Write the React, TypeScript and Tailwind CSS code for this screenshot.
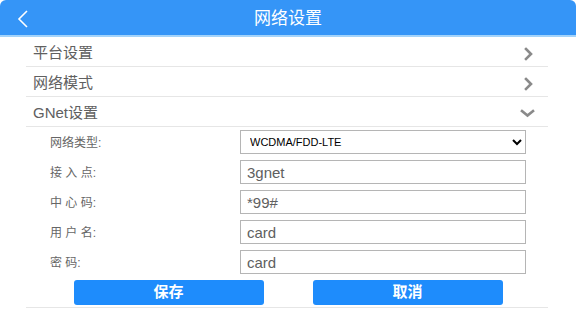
import { useState } from "react";

const fields = [
  { label: "接 入 点:", value: "3gnet" },
  { label: "中 心 码:", value: "*99#" },
  { label: "用 户 名:", value: "card" },
  { label: "密 码:", value: "card" },
];

function ChevronRight() {
  return (
    <svg width="9" height="14" viewBox="0 0 9 14" fill="none">
      <path d="M2 2l5 5-5 5" stroke="#8a8a8a" strokeWidth="2.6" strokeLinecap="square" />
    </svg>
  );
}

function ChevronDown() {
  return (
    <svg width="15" height="9" viewBox="0 0 15 9" fill="none">
      <path d="M2 2l5.5 4.5L13 2" stroke="#8a8a8a" strokeWidth="2.6" strokeLinecap="square" />
    </svg>
  );
}

export default function App() {
  const [netType, setNetType] = useState("WCDMA/FDD-LTE");
  const [values, setValues] = useState(fields.map((f) => f.value));

  return (
    <div
      className="w-[576px] h-[310px] bg-white overflow-hidden"
      style={{ fontFamily: '"Liberation Sans", Arial, "Noto Sans CJK SC", sans-serif' }}
    >
      {/* Header */}
      <header className="relative h-[37px] bg-[#3595f7] rounded-t-[6px] border-b-2 border-[#a3d3fa] flex items-center justify-center">
        <button className="absolute left-[17px] top-[9px]">
          <svg width="12" height="20" viewBox="0 0 12 20" fill="none">
            <path d="M10 2L2 10l8 8" stroke="white" strokeWidth="1.6" />
          </svg>
        </button>
        <h1 className="text-white text-[17px] leading-none mt-[1px]">网络设置</h1>
      </header>

      <div className="ml-[26px] w-[522px]">
        {/* Menu rows */}
        <div className="h-[30px] flex items-center justify-between pl-[7px] pr-[15px] border-b border-[#e6e6e6]">
          <span className="text-[15px] text-[#606060] pt-[4px]">平台设置</span>
          <span className="pt-[4px]"><ChevronRight /></span>
        </div>
        <div className="h-[30px] flex items-center justify-between pl-[7px] pr-[15px] border-b border-[#e6e6e6]">
          <span className="text-[15px] text-[#606060] pt-[4px]">网络模式</span>
          <span className="pt-[4px]"><ChevronRight /></span>
        </div>
        <div className="h-[30px] flex items-center justify-between pl-[7px] pr-[13px] border-b border-[#e6e6e6]">
          <span className="text-[15px] text-[#606060] pt-[4px]">GNet设置</span>
          <span className="pt-[4px]"><ChevronDown /></span>
        </div>

        {/* Form */}
        <div className="pt-[3px] border-b border-[#e6e6e6] pb-[2px]">
          <div className="h-[30px] flex items-start">
            <label className="w-[214px] pl-[24px] pt-[4px] text-[12px] text-[#666]">网络类型:</label>
            <select
              value={netType}
              onChange={(e) => setNetType(e.target.value)}
              className="w-[286px] h-[24px] border border-[#b5b5b5] bg-white text-[11px] text-black pl-[5px] pr-[4px]"
            >
              <option>WCDMA/FDD-LTE</option>
              <option>TD-SCDMA/TD-LTE</option>
              <option>CDMA2000</option>
            </select>
          </div>
          {fields.map((f, i) => (
            <div key={f.label} className="h-[30px] flex items-start">
              <label className="w-[214px] pl-[24px] pt-[4px] text-[12px] text-[#666] whitespace-pre">{f.label}</label>
              <input
                value={values[i]}
                onChange={(e) => setValues(values.map((v, j) => (j === i ? e.target.value : v)))}
                className="w-[286px] h-[24px] border border-[#b5b5b5] px-[6px] text-[15px] text-[#606060] outline-none"
              />
            </div>
          ))}
          <div className="flex justify-center gap-[49px] pl-[2px]">
            <button className="w-[190px] h-[25px] rounded-[3px] bg-[#1e8cfc] text-white text-[15px] font-bold">
              保存
            </button>
            <button className="w-[190px] h-[25px] rounded-[3px] bg-[#1e8cfc] text-white text-[15px] font-bold">
              取消
            </button>
          </div>
        </div>
      </div>
    </div>
  );
}
